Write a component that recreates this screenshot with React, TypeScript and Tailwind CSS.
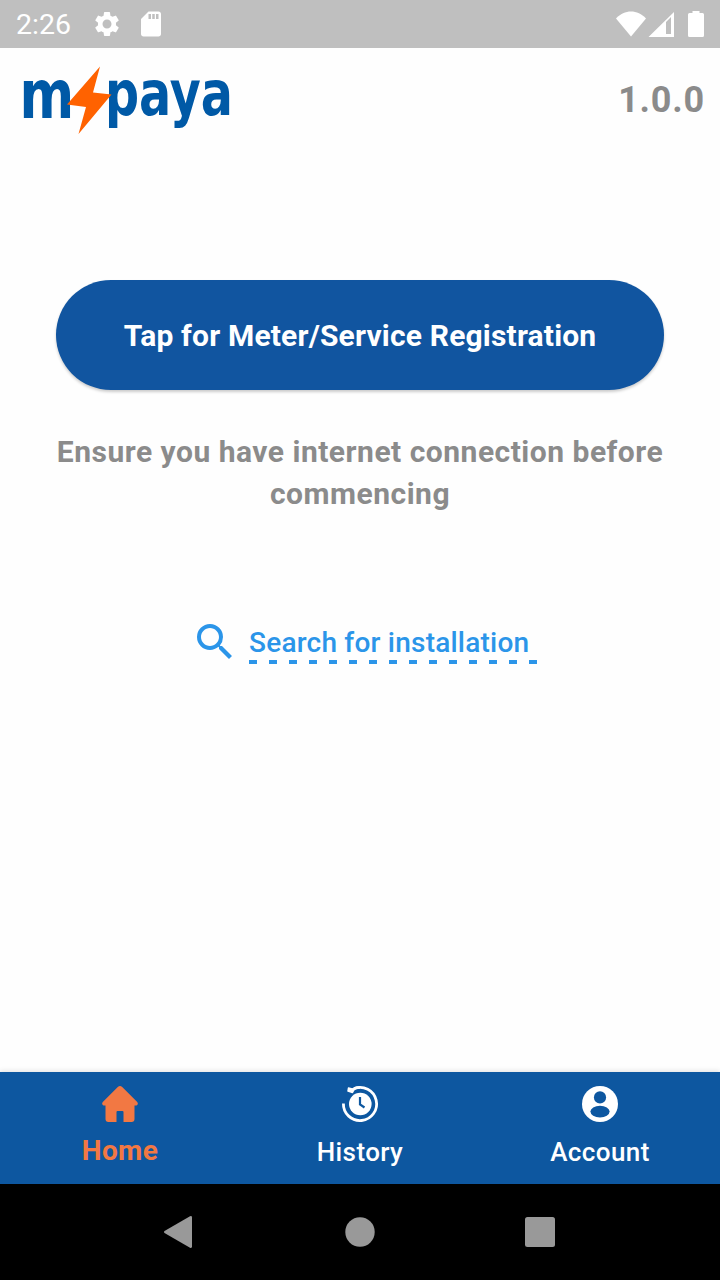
import { MdSearch, MdSdCard, MdSettings } from "react-icons/md";

function StatusBar() {
  return (
    <div className="h-12 shrink-0 bg-[#bfbfbf] text-white flex items-center justify-between pl-4 pr-[15px]">
      <div className="flex items-center">
        <span className="w-[54px] text-[28.5px] leading-none whitespace-nowrap mt-[3px]">2:26</span>
        <MdSettings size={30} className="ml-[22px]" />
        <MdSdCard size={30} className="ml-[14px]" />
      </div>
      <svg width="90" height="30" viewBox="615 9 90 30" fill="currentColor">
        <path d="M616 18.5C624.5 9.200 637.500 9.200 646 18.500L631 36.500Z" />
        <path fillRule="evenodd" d="M648.500 37L674 12V37ZM666 22V34H671V17Z" />
        <path d="M688 14.500Q688 13 689.500 13H692.500V11H699.500V13H702.500Q704 13 704 14.500V35.500Q704 37 702.500 37H689.500Q688 37 688 35.500Z" />
      </svg>
    </div>
  );
}

function Logo() {
  return (
    <svg width="236" height="104" viewBox="10 48 236 104" className="font-['DejaVu_Sans',sans-serif] font-bold">
      <g fill="#0059a6">
        <text x="19.500" y="117.500" fontSize="68" textLength="54.700" lengthAdjust="spacingAndGlyphs">m</text>
        <text x="105" y="115" fontSize="62" textLength="128" lengthAdjust="spacingAndGlyphs">paya</text>
      </g>
      <path d="M100 66.500L93 92.500L111.500 94.500L78.500 134L86 107L67 104.500Z" fill="#ff6200" />
    </svg>
  );
}

function HomeIcon() {
  return (
    <svg width="40" height="40" viewBox="0 0 40 40" fill="currentColor">
      <path d="M17.800 3Q20 1.200 22.200 3L37.200 18Q38.800 20 36.500 21.500H34.500V35Q34.500 38 31.500 38H23.500V28Q23.500 27 22.500 27H17.500Q16.500 27 16.500 28V38H8.500Q5.500 38 5.500 35V21.500H3.500Q1.200 20 2.800 18Z" />
    </svg>
  );
}

function HistoryIcon() {
  return (
    <svg width="40" height="40" viewBox="0 0 40 40" fill="none">
      <path d="M3.400 19.500A16.600 16.600 0 1 0 14 4.500" stroke="currentColor" strokeWidth="2.800" />
      <path d="M8.500 4L14 5.500L12.500 8.500L8 7Z" fill="currentColor" stroke="currentColor" strokeWidth="1.500" strokeLinejoin="round" />
      <path d="M12 6Q16 3.400 20 3.400" stroke="currentColor" strokeWidth="2.800" />
      <circle cx="20.300" cy="20" r="11.300" fill="currentColor" />
      <path d="M20 13V20.500L24.500 23.500" stroke="#0d57a0" strokeWidth="2.200" />
    </svg>
  );
}

function AccountIcon() {
  return (
    <svg width="40" height="40" viewBox="0 0 40 40">
      <circle cx="20" cy="20" r="18" fill="currentColor" />
      <g fill="#0d57a0">
        <circle cx="20" cy="13.400" r="6.100" />
        <ellipse cx="20" cy="27.600" rx="9.600" ry="5.800" />
      </g>
    </svg>
  );
}

export default function App() {
  return (
    <div className="h-[1280px] w-[720px] flex flex-col overflow-hidden bg-[#fefefe] font-[Roboto,sans-serif]">
      <StatusBar />

      <header className="h-[104px] shrink-0 flex items-center justify-between pl-[10px] pr-[15px]">
        <Logo />
        <span className="text-[36px] font-bold tracking-[0.8px] text-[#8b8b8b]">1.0.0</span>
      </header>

      <main className="flex-1 flex flex-col items-center pt-32 px-14">
        <button className="h-[110px] w-full rounded-full bg-[#1155a0] text-[30px] font-bold tracking-[0.18px] text-white shadow-[0_2px_3px_rgba(0,0,0,0.2)] whitespace-nowrap">
          Tap for Meter/Service Registration
        </button>
        <p className="mt-[41px] text-center text-[30px] leading-[42px] font-bold tracking-[0.5px] text-[#8b8b8b]">
          <span className="whitespace-nowrap">Ensure you have internet connection before</span>
          <br />
          commencing
        </p>

        <button className="mt-[103px] ml-2 flex items-start text-[#2b95e9]">
          <MdSearch size={48} />
          <span className="ml-[10px] flex flex-col">
            <span className="w-[288px] text-left text-[28px] leading-[42px] mt-[4px] font-medium tracking-[0.22px] whitespace-nowrap">
              Search for installation
            </span>
            <svg width="288" height="4" className="-mt-[4px]">
              <path d="M0 2H288" stroke="currentColor" strokeWidth="4" strokeDasharray="8 12" />
            </svg>
          </span>
        </button>
      </main>

      <nav className="h-28 shrink-0 grid grid-cols-3 bg-[#0d57a0] text-white text-[26px] font-medium tracking-[0.4px] shadow-[0_-1px_5px_rgba(0,0,0,0.12)]">
        <a className="flex flex-col items-center pt-3 text-[#f27843] text-[28px] font-bold">
          <HomeIcon />
          <span className="mt-[11px] leading-8">Home</span>
        </a>
        <a className="flex flex-col items-center pt-3">
          <HistoryIcon />
          <span className="mt-3 leading-8">History</span>
        </a>
        <a className="flex flex-col items-center pt-3">
          <AccountIcon />
          <span className="mt-3 leading-8">Account</span>
        </a>
      </nav>

      {/* Android system navigation */}
      <div className="h-24 shrink-0 bg-black flex items-center justify-center">
        <svg width="392" height="36" viewBox="164 1214 392 36" fill="#999">
          <path d="M164.500 1231Q163.500 1232 164.500 1233L190 1247.800Q192 1248.500 192 1246.500V1217.500Q192 1215.500 190 1216.200Z" />
          <circle cx="360" cy="1232" r="14.700" />
          <rect x="525" y="1217" width="30" height="30" rx="2.500" />
        </svg>
      </div>
    </div>
  );
}
